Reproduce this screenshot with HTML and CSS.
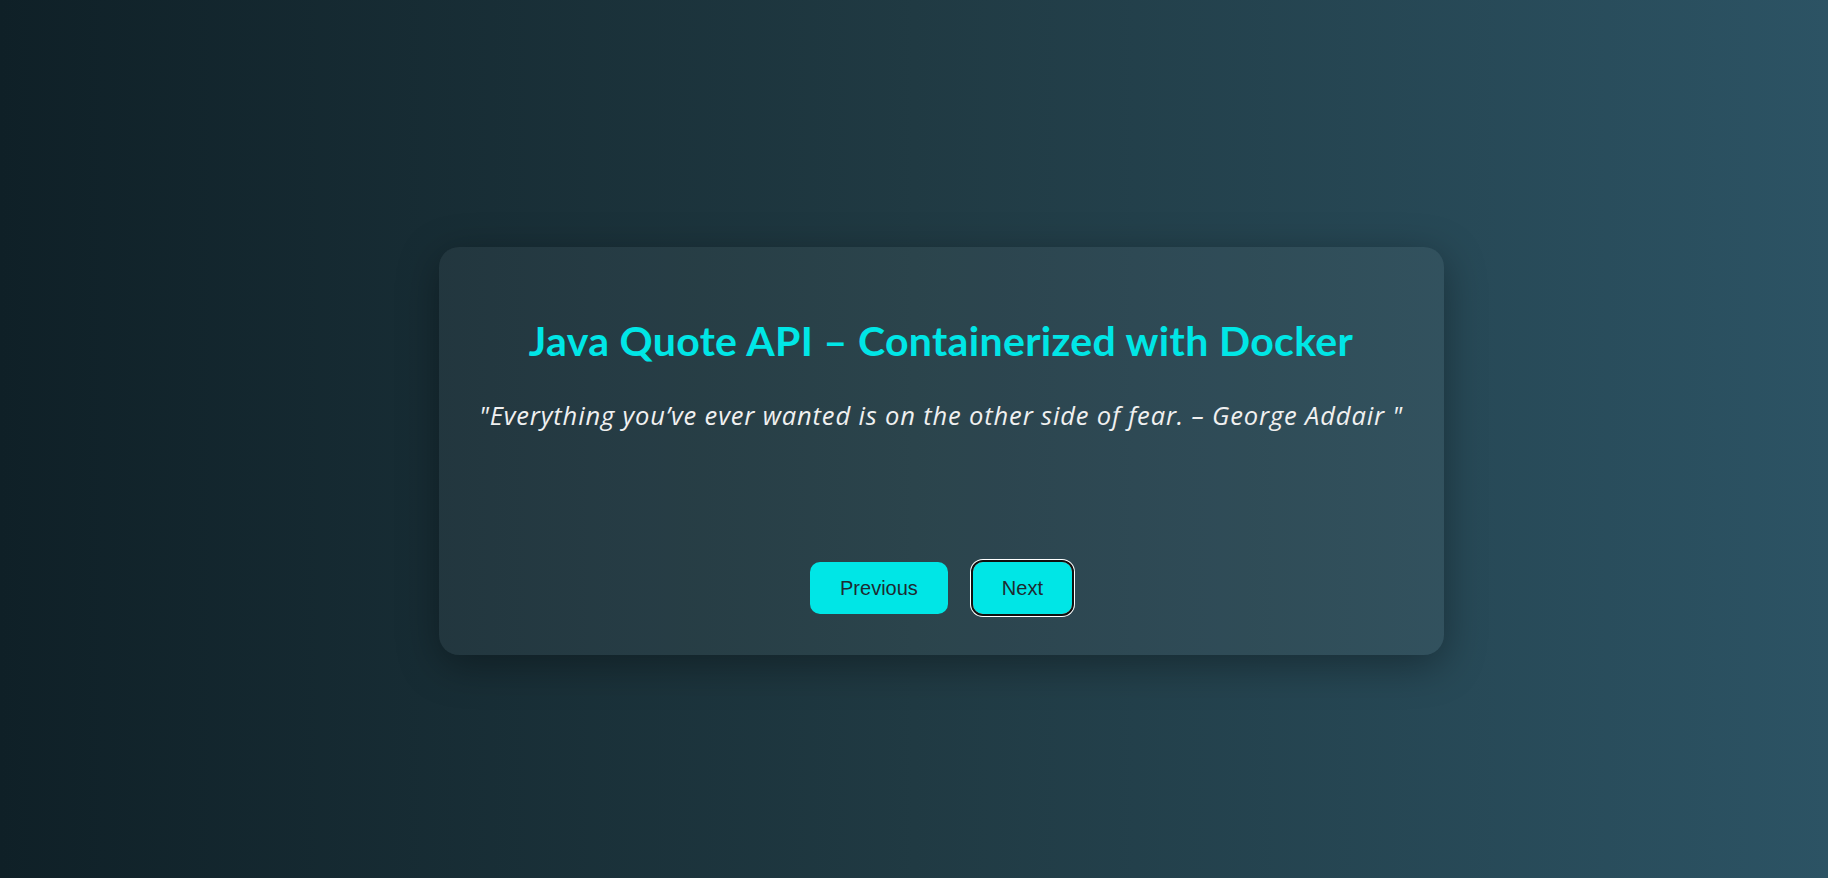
FILE: index.html
```html
<!DOCTYPE html>
<html lang="en">
<head>
<meta charset="utf-8">
<title>Java Quote API</title>
<link rel="stylesheet" href="styles.css">
</head>
<body>
<main class="stage">
  <section class="card">
    <h1 class="title">Java Quote API – Containerized with Docker</h1>
    <p class="quote">"Everything you’ve ever wanted is on the other side of fear. – George Addair "</p>
    <div class="actions">
      <button class="btn">Previous</button>
      <button class="btn btn-focus">Next</button>
    </div>
  </section>
</main>
</body>
</html>
```
FILE: styles.css
```css
html, body { margin: 0; height: 100%; }
body {
  background: linear-gradient(to right, #0f2027, #203a43, #2c5364);
  font-family: "Lato", "Open Sans", sans-serif;
}
.stage {
  height: 100%;
  box-sizing: border-box;
  display: flex;
  align-items: center;
  justify-content: center;
  padding: 24px 0 0 54px;
}
.card {
  width: 1005px;
  height: 408px;
  box-sizing: border-box;
  border-radius: 20px;
  background: rgba(255,255,255,0.05);
  box-shadow: 0 10px 40px rgba(0,0,0,0.35);
  display: flex;
  flex-direction: column;
  align-items: center;
  padding: 69px 30px 41px;
}
.title {
  margin: 0;
  color: #00e6e6;
  font-family: "Lato", sans-serif;
  font-size: 41px;
  line-height: 50px;
  letter-spacing: 0.33px;
  font-weight: 700;
  white-space: nowrap;
}
.quote {
  margin: 32px 0 0;
  color: #f0f0f0;
  font-family: "Open Sans", sans-serif;
  font-style: italic;
  font-size: 25.5px;
  line-height: 34px;
  letter-spacing: 0.85px;
  white-space: nowrap;
}
.actions { margin-top: auto; display: flex; gap: 25px; }
.btn {
  background: #00e6e6;
  border: none;
  border-radius: 10px;
  padding: 0 30px;
  height: 52px;
  font-family: "Liberation Sans", Arial, sans-serif;
  font-size: 20px;
  color: #1f2a30;
}
.btn-focus {
  padding: 0 29px;
  outline: 2px solid #101010;
  box-shadow: 0 0 0 3px #fff;
}
```
